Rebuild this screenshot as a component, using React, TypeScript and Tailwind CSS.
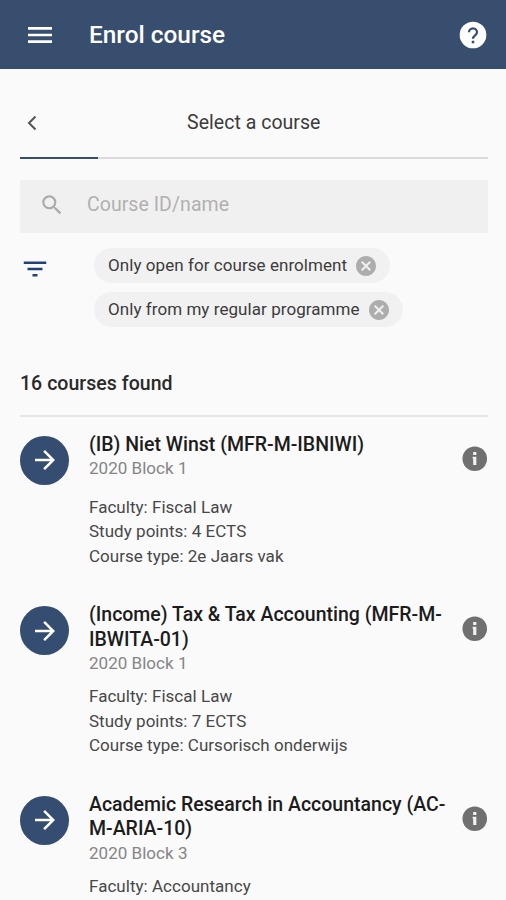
import {
  MdArrowForward,
  MdCancel,
  MdFilterList,
  MdMenu,
  MdSearch,
} from "react-icons/md";

type Course = {
  title: string[];
  block: string;
  details: string[];
};

const filters = ["Only open for course enrolment", "Only from my regular programme"];

const courses: Course[] = [
  {
    title: ["(IB) Niet Winst (MFR-M-IBNIWI)"],
    block: "2020 Block 1",
    details: ["Faculty: Fiscal Law", "Study points: 4 ECTS", "Course type: 2e Jaars vak"],
  },
  {
    title: ["(Income) Tax & Tax Accounting (MFR-M-", "IBWITA-01)"],
    block: "2020 Block 1",
    details: ["Faculty: Fiscal Law", "Study points: 7 ECTS", "Course type: Cursorisch onderwijs"],
  },
  {
    title: ["Academic Research in Accountancy (AC-", "M-ARIA-10)"],
    block: "2020 Block 3",
    details: ["Faculty: Accountancy"],
  },
];

function HelpIcon() {
  return (
    <svg viewBox="0 0 24 24" className="size-8">
      <circle cx="12" cy="12" r="10" fill="white" />
      <g fill="none" stroke="#384e6f" strokeWidth="1.7">
        <path d="M9 10a3 3 0 0 1 6 0c0 2.200-3 2.300-3 4.800" />
        <path d="M12 16.300v1.900" strokeWidth="1.900" />
      </g>
    </svg>
  );
}

function InfoIcon() {
  return (
    <svg viewBox="0 0 24 24" className="size-[29.5px]">
      <circle cx="12" cy="12" r="10" fill="#707070" />
      <path fill="#f0f0f0" d="M10.700 6.500h2.600v2.400h-2.600zM10.300 10.400h3v6.700h-2.600v-5.200h-.400z" />
    </svg>
  );
}

function CourseItem({ course }: { course: Course }) {
  return (
    <li className="flex items-start pb-[35px]">
      <button className="mt-[3px] flex size-[49px] shrink-0 items-center justify-center rounded-full bg-[#344d70] text-white">
        <MdArrowForward size={30} />
      </button>
      <div className="ml-5 min-w-0 flex-1 whitespace-nowrap">
        <div className="min-h-[62px] pb-[9px]">
          <h2 className="text-[19.5px] leading-[24.5px] font-medium text-[#1c1c1c]">
            {course.title.map((line) => (
              <span key={line} className="block">
                {line}
              </span>
            ))}
          </h2>
          <p className="text-[17px] leading-[23px] tracking-[0.03px] text-[#858585]">{course.block}</p>
        </div>
        {course.details.map((line) => (
          <p key={line} className="text-[17px] leading-[24.5px] tracking-[0.03px] text-[#484848]">
            {line}
          </p>
        ))}
      </div>
      <button className="mt-[11px] -mr-[2px] shrink-0">
        <InfoIcon />
      </button>
    </li>
  );
}

export default function App() {
  return (
    <div className="h-[900px] w-[506px] overflow-hidden bg-[#fafafa] font-['Roboto',sans-serif]">
      <header className="flex h-[69px] items-center bg-[#384e6f] pr-[17.5px] pl-6 text-white">
        <MdMenu size={32} />
        <h1 className="ml-[33px] flex-1 pt-px text-[24.4px] font-medium">Enrol course</h1>
        <HelpIcon />
      </header>

      <main className="pr-[18.5px] pl-5">
        <div className="flex h-[88px] items-center pt-[19px]">
          <svg viewBox="0 0 10 16" className="ml-[7px] h-4 w-2.5" fill="none" stroke="#555555" strokeWidth="2">
            <path d="M8.5 1.5 2 8l6.500 6.500" />
          </svg>
          <p className="flex-1 pr-[17px] text-center text-[19.5px] tracking-[0.03px] text-[#3c3c3c]">
            Select a course
          </p>
        </div>
        {/* wizard progress */}
        <div className="h-[2px] bg-[#dadada]">
          <div className="h-full w-[78px] bg-[#344d70]" />
        </div>

        <div className="mt-[21px] flex h-[53px] items-center bg-[#f0f0f0] pb-[3px] pl-[19px]">
          <MdSearch size={26} className="text-[#aaaaaa]" />
          <span className="ml-[22px] text-[19.5px] tracking-[0.05px] text-[#b0b0b0]">Course ID/name</span>
        </div>

        <div className="mt-[15px] flex items-start">
          <MdFilterList size={30} className="mt-[6px] text-[#20407a]" />
          <div className="ml-11 flex flex-col items-start gap-[9px]">
            {filters.map((label) => (
              <div
                key={label}
                className="flex h-[35px] items-center rounded-full bg-[#f1f1f1] pr-[12px] pl-[14px]"
              >
                <span className="pb-[2px] text-[17px] leading-[20px] tracking-[0.06px] text-[#3c3c3c]">{label}</span>
                <MdCancel size={24} className="ml-[7px] text-[#adadad]" />
              </div>
            ))}
          </div>
        </div>

        <p className="mt-[44px] text-[19.5px] leading-[26px] font-medium tracking-[0.04px] text-[#2a2a2a]">
          16 courses found
        </p>
        <div className="mt-[18px] h-[2px] bg-[#e4e4e4]" />

        <ul className="mt-[15.5px]">
          {courses.map((course) => (
            <CourseItem key={course.title[0]} course={course} />
          ))}
        </ul>
      </main>
    </div>
  );
}
